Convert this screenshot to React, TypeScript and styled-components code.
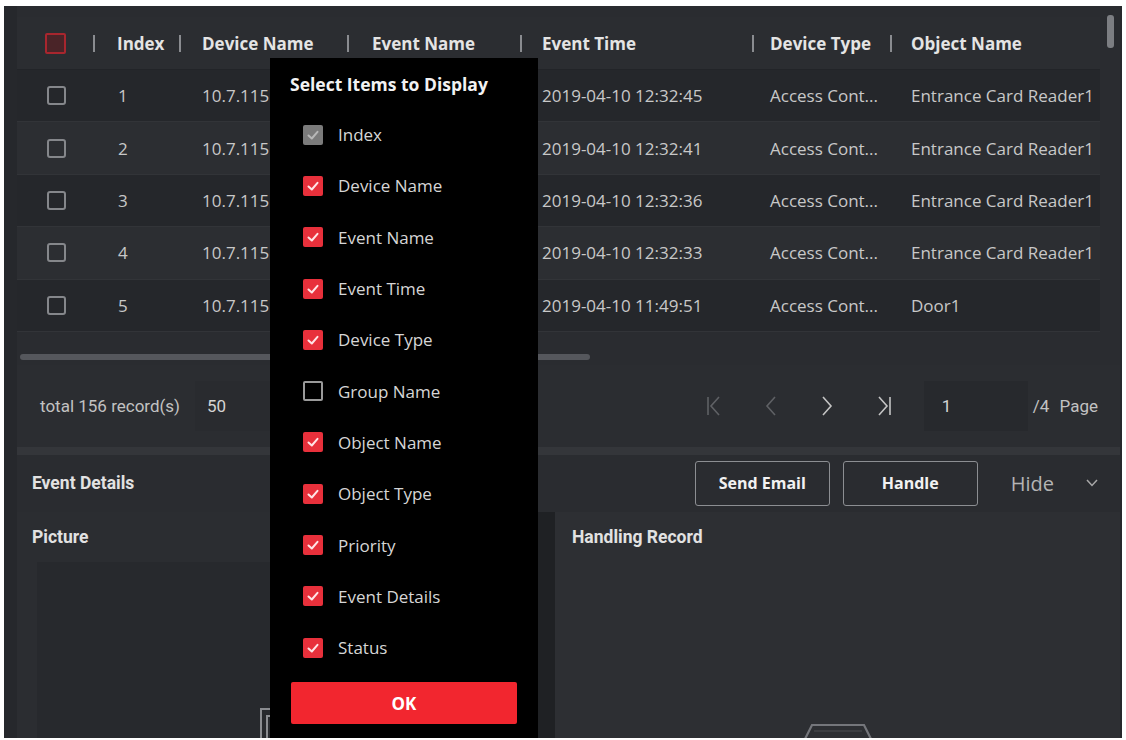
import React from 'react';
import styled, { createGlobalStyle } from 'styled-components';

const GlobalStyle = createGlobalStyle`
  html, body {
    margin: 0;
    padding: 0;
    background: #ffffff;
  }
  * {
    box-sizing: border-box;
  }
`;

type CheckState = 'on' | 'off' | 'locked' | 'header' | 'row';

interface IColumn {
  key: string;
  title: string;
  width: number;
  pad: number;
}

const columns: IColumn[] = [
  { key: 'check', title: '', width: 76, pad: 0 },
  { key: 'index', title: 'Index', width: 86, pad: 24 },
  { key: 'device', title: 'Device Name', width: 168, pad: 23 },
  { key: 'event', title: 'Event Name', width: 173, pad: 25 },
  { key: 'time', title: 'Event Time', width: 232, pad: 22 },
  { key: 'type', title: 'Device Type', width: 138, pad: 18 },
  { key: 'object', title: 'Object Name', width: 210, pad: 21 },
];

const gridTemplate = columns.map((c) => `${c.width}px`).join(' ');

// the event name column sits under the popup, so its cells stay empty here
const rows = [
  { index: '1', device: '10.7.115', time: '2019-04-10 12:32:45', type: 'Access Cont...', object: 'Entrance Card Reader1' },
  { index: '2', device: '10.7.115', time: '2019-04-10 12:32:41', type: 'Access Cont...', object: 'Entrance Card Reader1' },
  { index: '3', device: '10.7.115', time: '2019-04-10 12:32:36', type: 'Access Cont...', object: 'Entrance Card Reader1' },
  { index: '4', device: '10.7.115', time: '2019-04-10 12:32:33', type: 'Access Cont...', object: 'Entrance Card Reader1' },
  { index: '5', device: '10.7.115', time: '2019-04-10 11:49:51', type: 'Access Cont...', object: 'Door1' },
];

const displayItems: { label: string; state: CheckState }[] = [
  { label: 'Index', state: 'locked' },
  { label: 'Device Name', state: 'on' },
  { label: 'Event Name', state: 'on' },
  { label: 'Event Time', state: 'on' },
  { label: 'Device Type', state: 'on' },
  { label: 'Group Name', state: 'off' },
  { label: 'Object Name', state: 'on' },
  { label: 'Object Type', state: 'on' },
  { label: 'Priority', state: 'on' },
  { label: 'Event Details', state: 'on' },
  { label: 'Status', state: 'on' },
];

const Screen = styled.div`
  width: 1126px;
  height: 740px;
  padding: 6px 4px 2px 4px;
  background: #ffffff;
  overflow: hidden;
`;

const Frame = styled.div`
  position: relative;
  height: 100%;
  display: flex;
  flex-direction: column;
  background: #26282c;
  padding: 0 2px 0 13px;
  overflow: hidden;
  font-family: 'Open Sans', 'Noto Sans', sans-serif;
`;

const TableBlock = styled.div`
  flex: none;
  display: flex;
  background: #2a2c30;
`;

const TableMain = styled.div`
  width: 1083px;
  padding-top: 11px;
`;

const VScroll = styled.div`
  flex: 1;
  padding: 9px 0 0 7px;
`;

const VThumb = styled.div`
  width: 7px;
  height: 33px;
  border-radius: 3px;
  background: #7c7e82;
`;

const HeaderRow = styled.div`
  display: grid;
  grid-template-columns: ${gridTemplate};
  height: 53px;
  background: #2b2d31;
  border-bottom: 1px solid #222428;
`;

const HeaderCell = styled.div<{ $pad: number; $center?: boolean }>`
  display: flex;
  align-items: center;
  justify-content: ${(p) => (p.$center ? 'center' : 'flex-start')};
  gap: ${(p) => p.$pad - 2}px;
  font-size: 17px;
  font-weight: 700;
  color: #e4e4e4;
  white-space: nowrap;
  overflow: hidden;
`;

const Sep = styled.span`
  width: 2px;
  height: 17px;
  background: #8a8c90;
`;

const Row = styled.div<{ $odd: boolean }>`
  display: grid;
  grid-template-columns: ${gridTemplate};
  height: 52.4px;
  background: ${(p) => (p.$odd ? '#25272b' : '#2c2e32')};
  border-bottom: 1px solid #323438;
`;

const Cell = styled.div<{ $pad: number; $center?: boolean }>`
  display: flex;
  align-items: center;
  justify-content: ${(p) => (p.$center ? 'center' : 'flex-start')};
  padding-left: ${(p) => p.$pad}px;
  font-size: 17px;
  color: #c8c8c8;
  white-space: nowrap;
  overflow: hidden;
`;

const HScrollArea = styled.div`
  height: 33px;
  padding: 22px 0 0 3px;
`;

const HThumb = styled.div`
  width: 570px;
  height: 6px;
  border-radius: 3px;
  background: #55575c;
`;

const Box = styled.span<{ $state: CheckState }>`
  display: inline-flex;
  align-items: center;
  justify-content: center;
  flex: none;
  width: ${(p) => (p.$state === 'header' ? 21 : p.$state === 'row' ? 19 : 20)}px;
  height: ${(p) => (p.$state === 'header' ? 21 : p.$state === 'row' ? 19 : 20)}px;
  border-radius: ${(p) => (p.$state === 'row' ? 3 : 2)}px;
  border: 2px solid
    ${(p) =>
      p.$state === 'header'
        ? '#a8262e'
        : p.$state === 'row'
        ? '#85878b'
        : p.$state === 'off'
        ? '#9a9a9a'
        : 'transparent'};
  background: ${(p) =>
    p.$state === 'header'
      ? '#4a2428'
      : p.$state === 'on'
      ? '#e8303b'
      : p.$state === 'locked'
      ? '#7b7b7b'
      : 'transparent'};
`;

const CheckBox = ({ state }: { state: CheckState }) => (
  <Box $state={state}>
    {(state === 'on' || state === 'locked') && (
      <svg width="14" height="14" viewBox="0 0 14 14">
        <polyline
          points="2.5,7.5 5.8,10.5 11.5,3.8"
          fill="none"
          stroke={state === 'on' ? '#ffe4e6' : '#b8b8b8'}
          strokeWidth="2"
          strokeLinecap="round"
          strokeLinejoin="round"
        />
      </svg>
    )}
  </Box>
);

const Pager = styled.div`
  flex: none;
  height: 82px;
  display: flex;
  align-items: center;
  padding: 0 22px 0 23px;
  background: #2b2d31;
  font-family: Roboto, 'Liberation Sans', sans-serif;
  font-size: 17px;
  color: #c2c2c2;
`;

const Total = styled.span`
  width: 155px;
`;

const SizeSelect = styled.div`
  width: 80px;
  height: 50px;
  display: flex;
  align-items: center;
  padding-left: 12px;
  background: #292b2f;
  color: #d4d4d4;
`;

const Spacer = styled.div`
  flex: 1;
`;

const NavGroup = styled.div`
  display: flex;
  align-items: center;
  gap: 38px;
  margin-right: 32px;
`;

const NavButton = styled.span<{ $disabled?: boolean }>`
  display: inline-flex;
  color: ${(p) => (p.$disabled ? '#5f6165' : '#c4c4c4')};
`;

const PageInput = styled.div`
  width: 104px;
  height: 50px;
  display: flex;
  align-items: center;
  padding-left: 18px;
  background: #27292d;
  color: #d4d4d4;
`;

const PageLabel = styled.span`
  margin-left: 5px;
  word-spacing: 6px;
`;

const Band = styled.div`
  flex: none;
  height: 8px;
  background: #34363a;
`;

const DetailsBar = styled.div`
  flex: none;
  height: 57px;
  display: flex;
  align-items: center;
  padding: 0 22px 0 15px;
  background: #2a2c30;
`;

const SectionTitle = styled.span`
  font-family: Roboto, 'Liberation Sans', sans-serif;
  font-size: 17.5px;
  font-weight: 700;
  color: #e2e2e2;
`;

const Actions = styled.div`
  display: flex;
  gap: 13px;
`;

const ActionButton = styled.button`
  width: 135px;
  height: 45px;
  border: 1px solid #8c8e92;
  border-radius: 3px;
  background: transparent;
  font-family: 'Open Sans', sans-serif;
  font-size: 16px;
  font-weight: 700;
  color: #f2f2f2;
`;

const HideToggle = styled.div`
  display: flex;
  align-items: center;
  gap: 32px;
  margin-left: 33px;
  font-family: 'Open Sans', sans-serif;
  font-size: 20px;
  color: #b4b4b4;
`;

const Panels = styled.div`
  flex: 1;
  min-height: 0;
  display: flex;
  gap: 17px;
  background: #1f2124;
  overflow: hidden;
`;

const Panel = styled.div<{ $width?: number; $tone: string }>`
  ${(p) => (p.$width ? `width: ${p.$width}px;` : 'flex: 1;')}
  display: flex;
  flex-direction: column;
  background: ${(p) => p.$tone};
`;

const PanelHead = styled.div<{ $pad: number }>`
  flex: none;
  height: 50px;
  display: flex;
  align-items: center;
  padding-left: ${(p) => p.$pad}px;
`;

const PanelBody = styled.div<{ $inset: boolean; $top: number }>`
  flex: 1;
  display: flex;
  justify-content: center;
  margin: ${(p) => (p.$inset ? '0 20px 0 20px' : '0')};
  padding-top: ${(p) => p.$top}px;
  background: ${(p) => (p.$inset ? '#27292d' : 'transparent')};
`;

const Dialog = styled.div`
  position: absolute;
  left: 266px;
  top: 52px;
  width: 268px;
  bottom: -30px;
  padding: 14px 21px 0 20px;
  background: #000000;
`;

const DialogTitle = styled.div`
  font-size: 17.5px;
  font-weight: 700;
  line-height: 24px;
  color: #f2f2f2;
  white-space: nowrap;
`;

const ItemList = styled.div`
  margin-top: 13px;
`;

const Item = styled.div`
  height: 51.3px;
  display: flex;
  align-items: center;
  gap: 15px;
  padding-left: 13px;
  font-size: 17px;
  color: #d6d6d6;
`;

const OkButton = styled.button`
  width: 226px;
  height: 42px;
  margin: 9px 0 0 1px;
  border: none;
  border-radius: 2px;
  background: #f2262f;
  font-family: 'Open Sans', sans-serif;
  font-size: 17px;
  font-weight: 700;
  color: #ffffff;
`;

const Chevron = ({ dir, bar }: { dir: 'left' | 'right'; bar?: boolean }) => (
  <svg width="18" height="22" viewBox="0 0 18 22" fill="none" stroke="currentColor" strokeWidth="1.6">
    {dir === 'left' ? (
      <>
        <polyline points="13,2 5,11 13,20" />
        {bar && <line x1="2" y1="2" x2="2" y2="20" />}
      </>
    ) : (
      <>
        <polyline points="5,2 13,11 5,20" />
        {bar && <line x1="16" y1="2" x2="16" y2="20" />}
      </>
    )}
  </svg>
);

export default function App() {
  return (
    <>
      <GlobalStyle />
      <Screen>
        <Frame>
          <TableBlock>
            <TableMain>
              <HeaderRow>
                {columns.map((col, i) =>
                  i === 0 ? (
                    <HeaderCell key={col.key} $pad={2} $center>
                      <CheckBox state="header" />
                    </HeaderCell>
                  ) : (
                    <HeaderCell key={col.key} $pad={col.pad}>
                      <Sep />
                      <span>{col.title}</span>
                    </HeaderCell>
                  )
                )}
              </HeaderRow>
              {rows.map((row, r) => (
                <Row key={row.index} $odd={r % 2 === 0}>
                  <Cell $pad={2} $center>
                    <CheckBox state="row" />
                  </Cell>
                  <Cell $pad={columns[1].pad + 1}>{row.index}</Cell>
                  <Cell $pad={columns[2].pad}>{row.device}</Cell>
                  <Cell $pad={columns[3].pad} />
                  <Cell $pad={columns[4].pad}>{row.time}</Cell>
                  <Cell $pad={columns[5].pad}>{row.type}</Cell>
                  <Cell $pad={columns[6].pad}>{row.object}</Cell>
                </Row>
              ))}
              <HScrollArea>
                <HThumb />
              </HScrollArea>
            </TableMain>
            <VScroll>
              <VThumb />
            </VScroll>
          </TableBlock>

          <Pager>
            <Total>total 156 record(s)</Total>
            <SizeSelect>50</SizeSelect>
            <Spacer />
            <NavGroup>
              <NavButton $disabled>
                <Chevron dir="left" bar />
              </NavButton>
              <NavButton $disabled>
                <Chevron dir="left" />
              </NavButton>
              <NavButton>
                <Chevron dir="right" />
              </NavButton>
              <NavButton>
                <Chevron dir="right" bar />
              </NavButton>
            </NavGroup>
            <PageInput>1</PageInput>
            <PageLabel>/4 Page</PageLabel>
          </Pager>

          <Band />

          <DetailsBar>
            <SectionTitle>Event Details</SectionTitle>
            <Spacer />
            <Actions>
              <ActionButton>Send Email</ActionButton>
              <ActionButton>Handle</ActionButton>
            </Actions>
            <HideToggle>
              <span>Hide</span>
              <svg width="12" height="8" viewBox="0 0 12 8" fill="none" stroke="#a8a8a8" strokeWidth="1.5">
                <polyline points="1,1 6,6.5 11,1" />
              </svg>
            </HideToggle>
          </DetailsBar>

          <Panels>
            <Panel $width={521} $tone="#2b2d31">
              <PanelHead $pad={15}>
                <SectionTitle>Picture</SectionTitle>
              </PanelHead>
              <PanelBody $inset $top={146}>
                <svg width="36" height="40" viewBox="0 0 36 40" fill="none" stroke="#8a8c90" strokeWidth="2">
                  <rect x="1" y="1" width="34" height="44" />
                  <rect x="7" y="8" width="22" height="30" />
                </svg>
              </PanelBody>
            </Panel>
            <Panel $tone="#2d2f33">
              <PanelHead $pad={17}>
                <SectionTitle>Handling Record</SectionTitle>
              </PanelHead>
              <PanelBody $inset={false} $top={161}>
                <svg width="76" height="20" viewBox="0 0 76 20" fill="none" stroke="#74767b" strokeWidth="2.2">
                  <polyline points="3,20 12,2 64,2 73,20" />
                  <line x1="14" y1="8" x2="62" y2="8" stroke="#3c3e42" />
                </svg>
              </PanelBody>
            </Panel>
          </Panels>

          <Dialog>
            <DialogTitle>Select Items to Display</DialogTitle>
            <ItemList>
              {displayItems.map((item) => (
                <Item key={item.label}>
                  <CheckBox state={item.state} />
                  <span>{item.label}</span>
                </Item>
              ))}
            </ItemList>
            <OkButton>OK</OkButton>
          </Dialog>
        </Frame>
      </Screen>
    </>
  );
}
